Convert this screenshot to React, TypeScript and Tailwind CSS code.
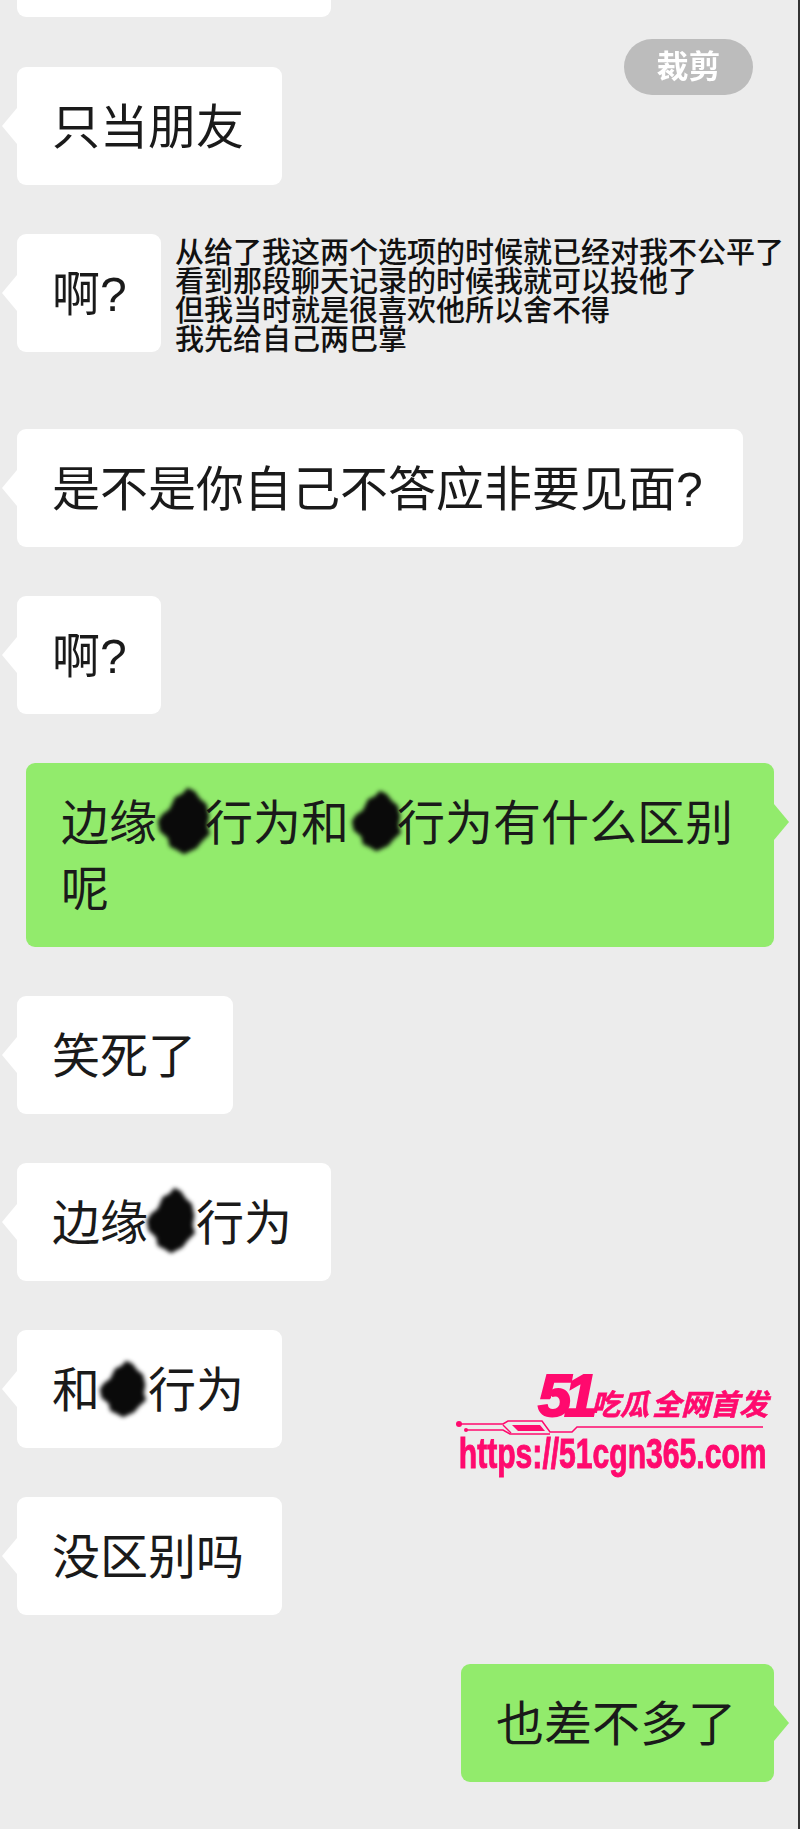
const Hidden = ({ className }: { className: string }) => (
  <span className="relative inline-block w-[48px] h-[66px] align-top">
    <svg viewBox="0 0 60 80" preserveAspectRatio="none" className={`absolute blur-[2px] ${className}`}>
      <path
        d="M34 1 L42 5 L48 14 L55 20 L58 34 L56 46 L59 55 L50 64 L44 72 L30 79 L22 74 L14 70 L12 60 L3 52 L1 40 L6 32 L14 26 L20 12 L28 8 Z"
        fill="#0a0a0a"
      />
    </svg>
  </span>
)

const Bubble = ({
  children,
  green,
  width = "w-fit",
  className,
}: {
  children: React.ReactNode
  green?: boolean
  width?: string
  className?: string
}) => (
  <div
    className={`relative rounded-[9px] pl-[35px] pr-[35px] pt-[28px] pb-[24px] text-[48px] leading-[66px] text-[#1a1a1a] ${
      green ? "bg-[#92eb6c]" : "bg-white"
    } ${width} ${className ?? ""}`}
  >
    <span
      className={`absolute top-[41px] w-0 h-0 border-y-[18px] border-y-transparent ${
        green
          ? "-right-[15px] border-l-[15px] border-l-[#92eb6c]"
          : "-left-[15px] border-r-[15px] border-r-white"
      }`}
    />
    {children}
  </div>
)

const Watermark = () => (
  <div className="absolute left-[456px] top-[1372px] flex flex-col w-[312px] text-[#ff0a6e]">
    <div className="flex items-end h-[48px] pl-[82px] whitespace-nowrap">
      <span className="relative w-[54px] text-[60px] leading-[48px] font-bold italic tracking-[-7px] font-['Liberation_Sans',sans-serif] [-webkit-text-stroke:2px_#ff0a6e]">
        51
        <span className="absolute left-[13px] top-[24px] w-0 h-0 border-y-[5px] border-y-transparent border-l-[8px] border-l-[#ececec]" />
      </span>
      <span className="text-[29px] leading-[30px] font-bold italic [-webkit-text-stroke:0.6px_#ff0a6e]">吃瓜</span>
      <span className="ml-[3px] text-[29px] leading-[30px] font-bold italic [-webkit-text-stroke:0.6px_#ff0a6e]">全网首发</span>
    </div>
    <svg viewBox="0 0 312 18" className="w-[312px] h-[18px] -mt-[2px]" fill="none" stroke="#ff0a6e" strokeWidth="1.5">
      <circle cx="3" cy="6" r="3" fill="#ff0a6e" stroke="none" />
      <circle cx="10" cy="12" r="2" fill="#ff0a6e" stroke="none" />
      <path d="M3 6 H47 L52 3 H86 L94 14 H116 L121 9 H307" />
      <path d="M10 12 H47 L54 16 H94" />
      <path d="M47 7 L55 15" />
      <path d="M56 7 H84 L89 13 H62 Z" fill="#ff0a6e" stroke="none" />
    </svg>
    <div className="origin-left scale-x-[0.7] pl-[4px] text-[43px] leading-[34px] font-bold whitespace-nowrap font-['Liberation_Sans',sans-serif] [-webkit-text-stroke:1px_#ff0a6e]">
      https://51cgn365.com
    </div>
  </div>
)

const App = () => {
  return (
    <div className="relative w-[800px] h-[1829px] overflow-hidden bg-[#ececec] font-['Liberation_Sans','Noto_Sans_CJK_SC',sans-serif] border-r-[2px] border-r-[#333333]">
      {/* cut off bubble on top */}
      <div className="absolute left-[17px] top-0 w-[314px] h-[17px] bg-white rounded-b-[9px]" />

      <div className="absolute left-[624px] top-[39px] flex items-center justify-center w-[129px] h-[56px] rounded-full bg-[#bcbcbc] text-white text-[32px] font-bold blur-[0.5px]">
        裁剪
      </div>

      <div className="absolute left-[175px] top-[239px] text-[29px] leading-[29px] font-medium text-[#111111] whitespace-nowrap">
        <div>从给了我这两个选项的时候就已经对我不公平了</div>
        <div>看到那段聊天记录的时候我就可以投他了</div>
        <div>但我当时就是很喜欢他所以舍不得</div>
        <div>我先给自己两巴掌</div>
      </div>

      <div className="flex flex-col gap-[49px] pt-[67px] pl-[17px] pr-[24px] blur-[0.4px]">
        <Bubble width="w-[265px]">只当朋友</Bubble>
        <Bubble width="w-[144px]">啊?</Bubble>
        <Bubble width="w-[726px]" className="mt-[28px]">是不是你自己不答应非要见面?</Bubble>
        <Bubble width="w-[144px]">啊?</Bubble>
        <Bubble green width="w-[748px]" className="ml-[9px]">
          边缘
          <Hidden className="left-0 -top-[4px] w-[54px] h-[68px]" />
          行为和
          <Hidden className="left-[2px] -top-[1px] w-[51px] h-[62px]" />
          行为有什么区别
          <br />
          呢
        </Bubble>
        <Bubble width="w-[216px]">笑死了</Bubble>
        <Bubble width="w-[314px]">
          边缘
          <Hidden className="-left-[2px] -top-[4px] w-[50px] h-[67px]" />
          行为
        </Bubble>
        <Bubble width="w-[265px]">
          和
          <Hidden className="-left-[1px] top-[2px] w-[48px] h-[58px]" />
          行为
        </Bubble>
        <Bubble width="w-[265px]">没区别吗</Bubble>
        <Bubble green width="w-[313px]" className="self-end">也差不多了</Bubble>
      </div>

      <Watermark />
    </div>
  )
}

export default App
